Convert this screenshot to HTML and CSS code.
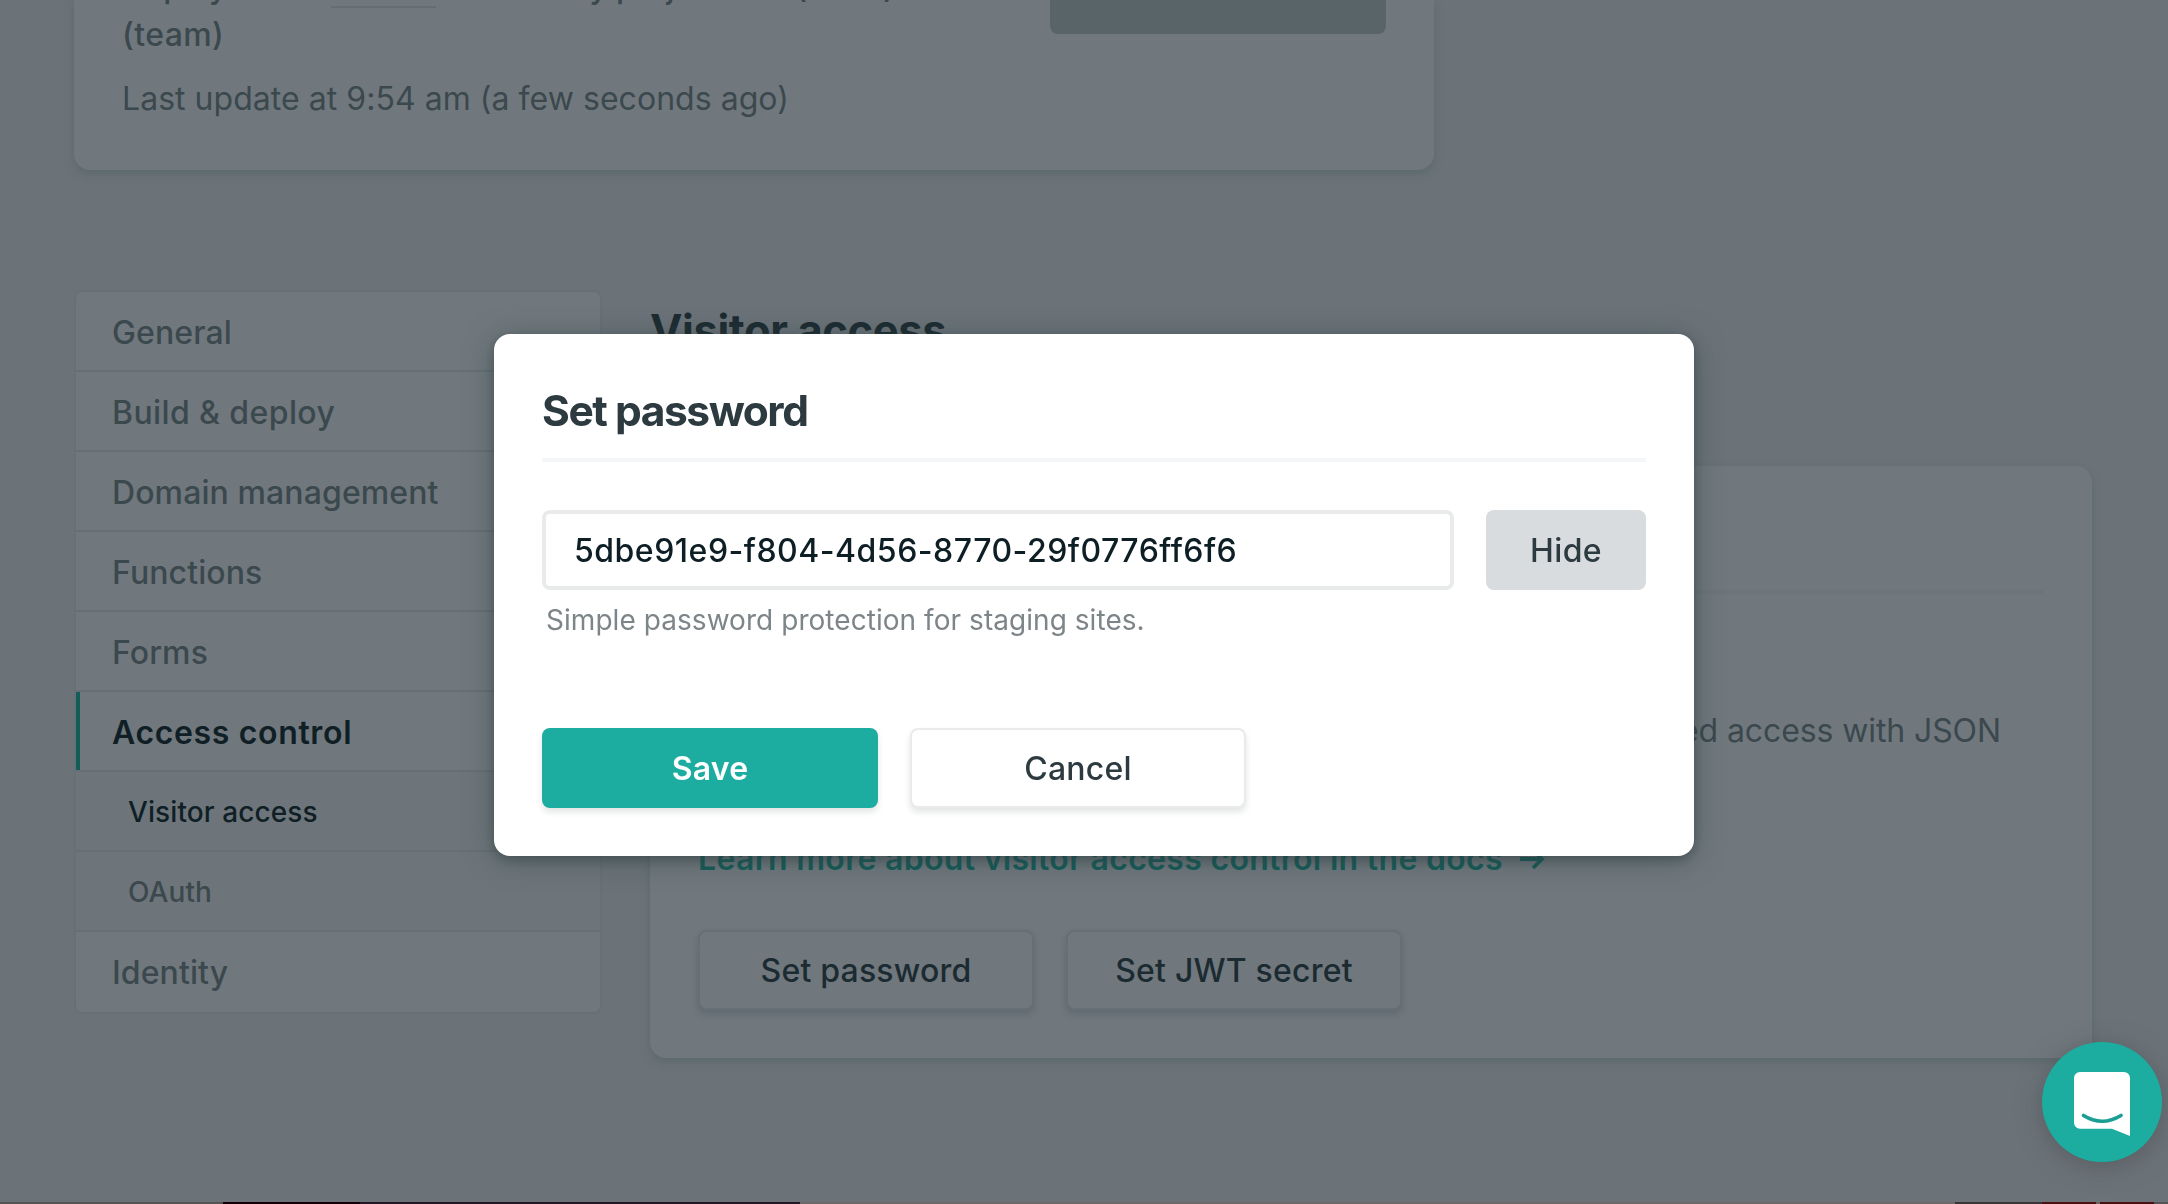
FILE: index.html
```html
<!DOCTYPE html>
<html lang="en">
<head>
<meta charset="utf-8">
<title>Visitor access</title>
<link rel="stylesheet" href="styles.css">
</head>
<body>
<main class="page">
  <section class="card summary">
    <div class="summary-text">
      <p class="deploys"><span class="source">Deploys from</span> <span class="repo">GitHub</span>. Owned by project dev (team)<br><span class="team">(team)</span></p>
      <p class="updated">Last update at 9:54 am (a few seconds ago)</p>
    </div>
    <div class="summary-action"></div>
  </section>

  <div class="settings">
    <nav class="menu">
      <a class="menu-item">General</a>
      <a class="menu-item wide">Build &amp; deploy</a>
      <a class="menu-item">Domain management</a>
      <a class="menu-item">Functions</a>
      <a class="menu-item">Forms</a>
      <a class="menu-item active">Access control</a>
      <a class="menu-item sub current">Visitor access</a>
      <a class="menu-item sub">OAuth</a>
      <a class="menu-item">Identity</a>
    </nav>
    <section class="content">
      <h2 class="heading">Visitor access</h2>
      <div class="card access">
        <div class="access-head"></div>
        <p class="access-text"><span class="line">Protect your site with a simple password or set up role-based access with JSON</span> Web Tokens.</p>
        <a class="learn">Learn more about visitor access control in the docs
          <svg class="arrow" width="26" height="22" viewBox="0 0 26 22" fill="none" stroke="currentColor" stroke-width="3.8"><path d="M1 11H23M14 2L23 11L14 20"/></svg>
        </a>
        <div class="actions">
          <button class="btn dim">Set password</button>
          <button class="btn dim">Set JWT secret</button>
        </div>
      </div>
    </section>
  </div>
  <div class="dock"></div>
</main>

<div class="overlay">
  <form class="modal">
    <h1 class="title">Set password</h1>
    <div class="field">
      <input class="input" type="text" value="5dbe91e9-f804-4d56-8770-29f0776ff6f6">
      <button class="btn hide" type="button">Hide</button>
    </div>
    <p class="hint">Simple password protection for staging sites.</p>
    <div class="actions">
      <button class="btn save" type="button">Save</button>
      <button class="btn" type="button">Cancel</button>
    </div>
  </form>
</div>

<div class="chat">
  <svg width="120" height="120" viewBox="0 0 120 120">
    <path d="M38 30H82a6 6 0 0 1 6 6V94L70 86.700H38a6 6 0 0 1-6-6V36a6 6 0 0 1 6-6Z" fill="#fff"/>
    <path d="M41.500 73.500Q60 85 79 73.500" fill="none" stroke="#1b9f94" stroke-width="3.600" stroke-linecap="round"/>
  </svg>
</div>
</body>
</html>
```
FILE: styles.css
```css
* { box-sizing: border-box; }

body {
  margin: 0;
  font-family: Inter, "Liberation Sans", sans-serif;
  font-size: 32px;
  line-height: 48px;
  letter-spacing: 0.1px;
  color: #3b484d;
  background: #6b7379;
}

p, h1, h2 { margin: 0; }

.page {
  display: flex;
  flex-direction: column;
  height: 1204px;
  padding-left: 74px;
  overflow: hidden;
}

.card {
  background: #70787e;
  border-radius: 16px;
  box-shadow: 0 4px 8px rgba(70, 90, 95, 0.42);
}

.summary {
  display: flex;
  justify-content: space-between;
  align-items: flex-end;
  flex: none;
  width: 1360px;
  height: 170px;
  padding: 0 48px;
  border-radius: 0 0 16px 16px;
}

.summary-text { padding-bottom: 47px; }
.deploys { font-weight: 500; letter-spacing: -0.1px; }
.source { letter-spacing: -0.35px; }
.team { letter-spacing: 0.4px; }
.repo { border-bottom: 2px solid #666e75; }
.updated { margin-top: 16px; letter-spacing: 0.04px; }

.summary-action {
  align-self: flex-start;
  width: 336px;
  height: 34px;
  background: #596469;
  border-radius: 0 0 8px 8px;
}

.settings {
  display: grid;
  grid-template-columns: 528px 1442px;
  gap: 48px;
  align-items: start;
  margin-top: 120px;
}

.menu {
  border: 2px solid #687077;
  border-radius: 8px;
  background: #70787e;
  font-weight: 500;
}

.menu-item {
  display: flex;
  align-items: center;
  height: 80px;
  padding: 4px 0 0 36px;
  border-bottom: 2px solid #666f75;
}

.menu-item:last-child { padding-top: 2px; border-bottom: 0; }
.wide { letter-spacing: 0.4px; }

.active {
  font-weight: 600;
  letter-spacing: 0.65px;
  color: #101f26;
  box-shadow: inset 4px 0 #145c58;
}

.sub {
  padding: 2px 0 0 52px;
  background: #6d757b;
  font-size: 28px;
  letter-spacing: 0.1px;
}

.current { color: #101f26; }

.content { padding-top: 14px; }

.heading {
  font-size: 43.5px;
  line-height: 52px;
  font-weight: 650;
  letter-spacing: -0.4px;
  color: #1c2b31;
}

.access { margin-top: 110px; padding: 0 48px 48px; }
.access-head { height: 128px; border-bottom: 4px solid #6d757b; }
.access-text { margin-top: 113px; letter-spacing: -0.1px; }
.access-text .line {
  display: block;
  padding-right: 43px;
  text-align: right;
  white-space: nowrap;
}

.learn {
  display: flex;
  align-items: center;
  gap: 16px;
  margin-top: 32px;
  font-weight: 600;
  letter-spacing: 0.31px;
  color: #145c58;
}

.actions { display: flex; gap: 32px; }
.access .actions { margin-top: 47px; }

.btn {
  width: 336px;
  height: 80px;
  padding: 1px 0 0;
  border: 2px solid #e9ebeb;
  border-radius: 8px;
  background: #fff;
  box-shadow: 0 4px 6px rgba(14, 30, 37, 0.12);
  font: inherit;
  font-weight: 500;
  letter-spacing: 0.2px;
  color: #2d3b41;
}

.dim {
  border-color: #676f76;
  background: #70787e;
  color: #1c2b31;
  box-shadow: 0 4px 6px rgba(40, 55, 62, 0.22);
}

.dock {
  flex: none;
  height: 2px;
  margin: auto 0 0 -74px;
  background: linear-gradient(90deg, #555354 223px, #120008 223px 360px, #221525 360px 800px, #6c6869 800px 1955px, #3a3638 1955px 2042px, #4a1012 2042px 2096px, #6a6264 2096px 2100px, #4a1012 2100px 2154px, #555354 2154px);
}

.overlay {
  position: fixed;
  inset: 0;
  padding: 334px 0 0 494px;
}

.modal {
  width: 1200px;
  height: 522px;
  padding: 51px 48px 48px;
  border-radius: 16px;
  background: #fff;
  box-shadow: 0 4px 28px rgba(45, 65, 65, 0.55), 0 4px 8px rgba(45, 60, 62, 0.35);
}

.title {
  padding-bottom: 21px;
  border-bottom: 4px solid #f5f6f8;
  font-size: 42.5px;
  line-height: 52px;
  font-weight: 650;
  letter-spacing: -1.45px;
  color: #2d3b41;
}

.field { display: flex; gap: 32px; margin-top: 48px; }

.input {
  width: 912px;
  height: 80px;
  padding: 0 28px;
  border: 4px solid #e9ebeb;
  border-radius: 8px;
  background: #fff;
  font: inherit;
  font-weight: 500;
  letter-spacing: 0.5px;
  color: #0e1e25;
}

.hide {
  width: 160px;
  border: 0;
  background: #d8dcdf;
  box-shadow: none;
  letter-spacing: 0.4px;
}

.hint {
  margin: 10px 0 88px;
  padding-left: 4px;
  font-size: 28px;
  line-height: 40px;
  letter-spacing: 0.05px;
  color: #7d8589;
}

.save {
  border: 0;
  background: #1caca0;
  font-weight: 600;
  color: #fff;
}

.chat {
  position: fixed;
  left: 2042px;
  top: 1042px;
  width: 120px;
  height: 120px;
  border-radius: 50%;
  background: #1caca0;
  box-shadow: 0 4px 24px rgba(70, 70, 70, 0.5);
}

.chat svg { display: block; }
```
